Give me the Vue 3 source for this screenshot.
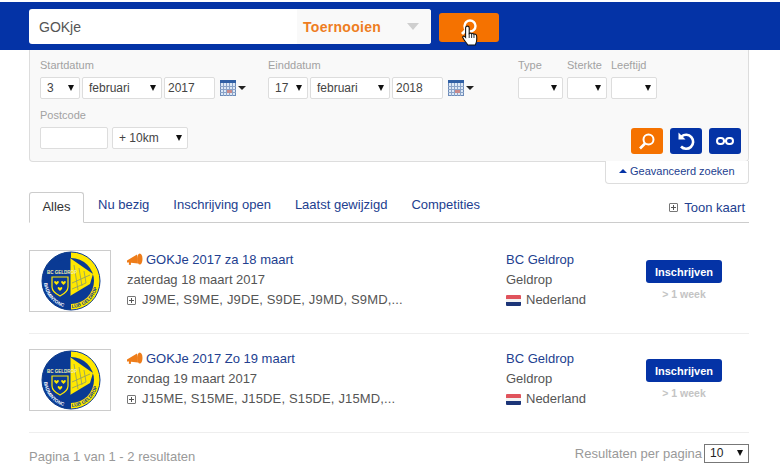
<template>
  <div class="page">
    <header class="topbar">
      <div class="searchbox">
        <span class="query">GOKje</span>
        <div class="scope">
          <span class="scope-label">Toernooien</span>
          <span class="scope-arrow"></span>
        </div>
      </div>
      <button class="go-btn">
        <svg width="22" height="22" viewBox="0 0 22 22"><circle cx="12" cy="9" r="5.5" fill="none" stroke="#fff" stroke-width="2.4" /><path d="M8 13l-4 4" stroke="#fff" stroke-width="3" /></svg>
        <svg class="hand" width="18" height="24" viewBox="0 0 20 25">
          <path d="M6 1.5c1.2 0 2 .8 2 2v6.2c.9-.6 2-.5 2.7.3.9-.5 2-.3 2.6.5 1-.5 2.3 0 2.7 1 .4 1.2.5 4 .2 6.500-.2 1.700-.8 3-1.500 4.500H6.500c-.9-1.600-2.200-3.100-3.600-4.800L1 14.500c-.7-1 .6-2.500 1.900-1.600L4 14V3.500c0-1.200.8-2 2-2z" fill="#fff" stroke="#111" stroke-width="1.200" />
          <path d="M8 9.700v5M10.700 10v4.700M13.300 10.500v4.200" stroke="#111" stroke-width="1" fill="none" />
        </svg>
      </button>
    </header>

    <section class="filters">
      <div class="filter-row">
        <div v-for="d in dates" :key="d.label" class="field date-field">
          <label>{{ d.label }}</label>
          <div class="controls">
            <div class="sel w-day"><span>{{ d.day }}</span><i></i></div>
            <div class="sel w-month"><span>februari</span><i></i></div>
            <div class="inp w-year">{{ d.year }}</div>
            <div class="cal">
              <svg width="16" height="16" viewBox="0 0 16 16">
                <rect x="0.5" y="0.5" width="15" height="15" fill="#dce8f6" stroke="#6d8bb8" />
                <rect x="0" y="0" width="16" height="3" fill="#2f5fa5" />
                <path d="M0 6.5h16M0 9.5h16M0 12.5h16M3.5 3v13M6.5 3v13M9.5 3v13M12.5 3v13" stroke="#8aa3c8" stroke-width="1" />
                <rect x="7" y="10" width="5" height="3" fill="#c98a8a" />
              </svg>
              <i></i>
            </div>
          </div>
        </div>
        <div class="small-fields">
          <div class="field">
            <label>Type</label>
            <div class="sel w-type"><span></span><i></i></div>
          </div>
          <div class="field">
            <label>Sterkte</label>
            <div class="sel w-strength"><span></span><i></i></div>
          </div>
          <div class="field">
            <label>Leeftijd</label>
            <div class="sel w-age"><span></span><i></i></div>
          </div>
        </div>
      </div>
      <div class="filter-row second">
        <div class="field">
          <label>Postcode</label>
          <div class="controls">
            <div class="inp w-post"></div>
            <div class="sel w-range"><span>+ 10km</span><i></i></div>
          </div>
        </div>
        <div class="actions">
          <button class="act orange">
            <svg width="20" height="20" viewBox="0 0 20 20"><circle cx="11.5" cy="8.5" r="5" fill="none" stroke="#fff" stroke-width="2" /><path d="M8 12.500l-5 5" stroke="#fff" stroke-width="2.6" /></svg>
          </button>
          <button class="act">
            <svg width="20" height="20" viewBox="0 0 20 20"><path d="M5.500 5.500A7 7 0 1 1 5 15.500" fill="none" stroke="#fff" stroke-width="2.6" /><path d="M2.500 1.500v7h7z" fill="#fff" /></svg>
          </button>
          <button class="act">
            <svg width="20" height="20" viewBox="0 0 20 20"><rect x="2" y="7" width="7" height="6" rx="3" fill="none" stroke="#fff" stroke-width="2" /><rect x="11" y="7" width="7" height="6" rx="3" fill="none" stroke="#fff" stroke-width="2" /><path d="M8 10h4" stroke="#fff" stroke-width="2" /></svg>
          </button>
        </div>
      </div>
    </section>
    <div class="advanced-wrap">
      <a class="advanced"><i></i>Geavanceerd zoeken</a>
    </div>

    <nav class="tabs">
      <a v-for="tab in tabs" :key="tab" class="tab" :class="{ active: tab === 'Alles' }">{{ tab }}</a>
      <a class="map-toggle"><span class="plus"></span>Toon kaart</a>
    </nav>

    <div class="results">
      <article v-for="t in tournaments" :key="t.title" class="result">
        <div class="logo">
          <svg width="80" height="60" viewBox="0 0 80 60">
            <defs>
              <path id="ring-path" d="M14 30a27 27 0 0 0 54 0" />
            </defs>
            <circle cx="41" cy="30" r="29" fill="#ffe800" stroke="#0a3a94" stroke-width="1" />
            <path d="M41 1a29 29 0 0 0 0 58z" fill="#0a3a94" />
            <circle cx="41" cy="30" r="23" fill="#0a3a94" />
            <path d="M40 7l23 16-3 10-20 12z" fill="#ffe800" />
            <path d="M40 7v38" stroke="#0a3a94" stroke-width="1" />
            <path d="M44 14l4 25M49 17l3 18M54 20l2 12M42 32l18-8M42 38l14-6" stroke="#8a9a6a" stroke-width="0.8" fill="none" />
            <path d="M22 26h16v10c0 4-4 7-8 9-4-2-8-5-8-9z" fill="#0a3a94" stroke="#ffe800" stroke-width="1.2" />
            <path d="M26.500 31c-1.500-2-3-.5-2 1l2 2 2-2c1-1.500-.5-3-2-1zM33.500 31c-1.500-2-3-.5-2 1l2 2 2-2c1-1.500-.5-3-2-1zM30 37c-1.500-2-3-.5-2 1l2 2 2-2c1-1.500-.5-3-2-1z" fill="#ffe800" />
            <text x="32" y="23" class="logo-top" text-anchor="middle">BC GELDROP</text>
            <text class="logo-ring light"><textPath href="#ring-path" startOffset="2">BADMINTONC</textPath></text>
            <text class="logo-ring dark"><textPath href="#ring-path" startOffset="43">LUB GELDROP</textPath></text>
          </svg>
        </div>
        <div class="info">
          <a class="title">
            <svg class="horn" width="16" height="13" viewBox="0 0 16 13">
              <path d="M0 7.500L10 1.500l1 9-7-.8-.2 2.300-2-.2.200-2.300L0 9.500z" fill="#ee7d1a" />
              <ellipse cx="12.800" cy="6" rx="2.700" ry="5.500" fill="#ee7d1a" />
            </svg>{{ t.title }}
          </a>
          <div class="line">{{ t.date }}</div>
          <div class="line cats"><span class="plus"></span>{{ t.cats }}</div>
        </div>
        <div class="club">
          <a class="title">BC Geldrop</a>
          <div class="line">Geldrop</div>
          <div class="line country">
            <span class="flag"></span>Nederland
          </div>
        </div>
        <div class="signup">
          <button class="signup-btn">Inschrijven</button>
          <span class="when">&gt; 1 week</span>
        </div>
      </article>
    </div>

    <footer class="pager">
      <span>Pagina 1 van 1 - 2 resultaten</span>
      <div class="per-page">
        <span>Resultaten per pagina</span>
        <div class="sel page-sel"><span>10</span><i></i></div>
      </div>
    </footer>
  </div>
</template>

<script setup>
const dates = [
  { label: 'Startdatum', day: 3, year: 2017 },
  { label: 'Einddatum', day: 17, year: 2018 }
]

const tabs = ['Alles', 'Nu bezig', 'Inschrijving open', 'Laatst gewijzigd', 'Competities']

const tournaments = [
  {
    title: 'GOKJe 2017 za 18 maart',
    date: 'zaterdag 18 maart 2017',
    cats: 'J9ME, S9ME, J9DE, S9DE, J9MD, S9MD,...'
  },
  {
    title: 'GOKJe 2017 Zo 19 maart',
    date: 'zondag 19 maart 2017',
    cats: 'J15ME, S15ME, J15DE, S15DE, J15MD,...'
  }
]
</script>

<style>
html, body {
  margin: 0;
  background: #fff;
  overflow: hidden;
}
</style>

<style scoped>
.page {
  width: 780px;
  height: 469px;
  overflow: hidden;
  padding-top: 2px;
  box-sizing: border-box;
  font-family: "Liberation Sans", Arial, sans-serif;
  font-size: 14px;
  color: #555;
}

.topbar {
  height: 48px;
  background: #0433a6;
  display: flex;
  align-items: flex-start;
  padding: 7px 0 0 29px;
  box-sizing: border-box;
}

.searchbox {
  width: 402px;
  height: 35px;
  background: #fff;
  border-radius: 3px;
  display: flex;
  align-items: center;
  justify-content: space-between;
  overflow: hidden;
}

.query {
  padding-left: 10px;
  font-size: 14px;
  color: #555;
}

.scope {
  width: 134px;
  height: 100%;
  background: #f9f9f9;
  display: flex;
  align-items: center;
  justify-content: space-between;
  padding: 0 12px 0 6px;
  box-sizing: border-box;
}

.scope-label {
  color: #ee7d22;
  font-weight: 700;
  font-size: 14px;
  letter-spacing: 0.3px;
}

.scope-arrow {
  width: 0;
  height: 0;
  border-left: 6px solid transparent;
  border-right: 6px solid transparent;
  border-top: 7px solid #cfcfcf;
}

.go-btn {
  position: relative;
  width: 60px;
  height: 29px;
  margin: 4px 0 0 8px;
  background: #f57200;
  border: none;
  border-radius: 3px;
  padding: 0;
  display: flex;
  align-items: center;
  justify-content: center;
}

.hand {
  position: absolute;
  left: 23px;
  top: 11px;
}

.filters {
  width: 720px;
  height: 112px;
  margin-left: 29px;
  padding: 9px 11px 0 10px;
  box-sizing: border-box;
  background: #f9f9f9;
  border: 1px solid #ddd;
  border-top: none;
  border-radius: 0 0 4px 4px;
}

.filter-row {
  display: flex;
}

.filter-row.second {
  margin-top: 10px;
  justify-content: space-between;
  align-items: flex-end;
}

.field label {
  display: block;
  height: 18px;
  font-size: 11px;
  line-height: 13px;
  color: #a2a2a2;
}

.date-field {
  width: 228px;
}

.controls {
  display: flex;
  gap: 2px;
}

.small-fields {
  display: flex;
  gap: 4px;
  margin-left: 22px;
}

.sel,
.inp {
  height: 22px;
  box-sizing: border-box;
  background: #fff;
  border: 1px solid #ddd;
  border-radius: 2px;
  font-size: 12px;
  line-height: 20px;
  color: #444;
}

.sel {
  display: flex;
  align-items: center;
  justify-content: space-between;
  padding: 0 5px 0 6px;
}

.sel i {
  width: 0;
  height: 0;
  border-left: 3px solid transparent;
  border-right: 3px solid transparent;
  border-top: 6px solid #111;
  margin-top: -1px;
}

.inp {
  padding-left: 3px;
}

.w-day { width: 40px; }
.w-month { width: 80px; }
.w-year { width: 51px; }
.w-type { width: 45px; }
.w-strength { width: 40px; }
.w-age { width: 46px; }
.w-post { width: 68px; }
.w-range { width: 76px; margin-left: 2px; }

.cal {
  display: flex;
  align-items: center;
  gap: 2px;
  margin-left: 3px;
}

.cal i {
  width: 0;
  height: 0;
  border-left: 4px solid transparent;
  border-right: 4px solid transparent;
  border-top: 4px solid #222;
}

.actions {
  display: flex;
  gap: 7px;
  margin-bottom: -5px;
  margin-right: -4px;
}

.act {
  width: 32px;
  height: 26px;
  background: #0433a6;
  border: none;
  border-radius: 3px;
  padding: 0;
  display: flex;
  align-items: center;
  justify-content: center;
}

.act.orange {
  background: #f57200;
}

.advanced-wrap {
  display: flex;
  justify-content: flex-end;
  width: 720px;
  margin-left: 29px;
  margin-top: -1px;
  position: relative;
}

.advanced {
  width: 144px;
  height: 23px;
  box-sizing: border-box;
  background: #fff;
  border: 1px solid #ddd;
  border-top: none;
  border-radius: 0 0 4px 4px;
  font-size: 11px;
  line-height: 18px;
  color: #22408f;
  display: flex;
  align-items: center;
  padding-left: 13px;
  padding-bottom: 2px;
}

.advanced i {
  width: 0;
  height: 0;
  border-left: 4px solid transparent;
  border-right: 4px solid transparent;
  border-bottom: 4px solid #0433a6;
  margin-right: 3px;
}

.tabs {
  width: 720px;
  height: 31px;
  margin: 8px 0 0 29px;
  box-sizing: border-box;
  border-bottom: 1px solid #ccc;
  display: flex;
  gap: 24px;
  font-size: 13px;
}

.tab {
  height: 30px;
  line-height: 26px;
  color: #22408f;
  box-sizing: border-box;
}

.tab.active {
  width: 55px;
  height: 31px;
  margin-right: -10px;
  text-align: center;
  color: #333;
  line-height: 28px;
  background: #fff;
  border: 1px solid #ccc;
  border-bottom-color: #fff;
  border-radius: 3px 3px 0 0;
}

.map-toggle {
  margin-left: auto;
  padding-right: 4px;
  color: #22408f;
  display: flex;
  align-items: center;
  height: 30px;
}

.plus {
  display: inline-block;
  width: 9px;
  height: 9px;
  box-sizing: border-box;
  border: 1px solid #777;
  border-radius: 1px;
  margin-right: 6px;
  flex: none;
  background:
    linear-gradient(#555, #555) center / 5px 1px no-repeat,
    linear-gradient(#555, #555) center / 1px 5px no-repeat;
}

.results {
  margin-top: 12px;
}

.result {
  width: 720px;
  margin-left: 29px;
  height: 99px;
  padding-top: 15px;
  box-sizing: border-box;
  border-bottom: 1px solid #eee;
  display: flex;
  align-items: flex-start;
}

.logo {
  width: 82px;
  height: 62px;
  box-sizing: border-box;
  border: 1px solid #ccc;
  background: #fff;
  flex: none;
}

.logo svg {
  display: block;
}

.logo-top {
  font-size: 4.5px;
  font-weight: 700;
  fill: #f4f0b0;
}

.logo-ring {
  font-size: 4.8px;
  font-weight: 700;
}

.logo-ring.light {
  fill: #ffffff;
}

.logo-ring.dark {
  fill: #0a3a94;
}

.info {
  width: 379px;
  margin-left: 16px;
}

.club {
  width: 140px;
}

.title {
  display: flex;
  align-items: center;
  height: 20px;
  box-sizing: border-box;
  padding-bottom: 2px;
  color: #22408f;
  font-size: 13px;
}

.horn {
  margin-right: 3px;
}

.line {
  height: 20px;
  line-height: 20px;
  font-size: 13px;
  color: #555;
  white-space: nowrap;
}

.cats {
  letter-spacing: 0.15px;
}

.cats,
.country {
  display: flex;
  align-items: center;
}

.flag {
  width: 15px;
  height: 11px;
  margin-right: 5px;
  background: linear-gradient(#e0535c 0 33%, #f2f2f2 33% 66%, #1c3578 66%);
  border-radius: 1px;
}

.signup {
  display: flex;
  flex-direction: column;
  align-items: center;
  width: 76px;
  margin-top: 10px;
}

.signup-btn {
  width: 76px;
  height: 23px;
  border: none;
  border-radius: 3px;
  background: #0433a6;
  color: #fff;
  font-family: inherit;
  font-weight: 700;
  font-size: 11px;
  padding: 0;
}

.when {
  margin-top: 5px;
  font-size: 10.5px;
  font-weight: 700;
  color: #c4c4c4;
}

.pager {
  width: 720px;
  margin: 14px 0 0 29px;
  display: flex;
  justify-content: space-between;
  font-size: 13px;
  color: #999;
}

.pager > span {
  margin-top: 2px;
}

.per-page {
  display: flex;
  align-items: center;
  gap: 2px;
  margin-top: -5px;
  height: 22px;
}

.page-sel {
  width: 45px;
  height: 19px;
  border: 1px solid #777;
  border-radius: 0;
  color: #222;
  font-size: 12px;
  padding: 0 5px;
}
</style>
